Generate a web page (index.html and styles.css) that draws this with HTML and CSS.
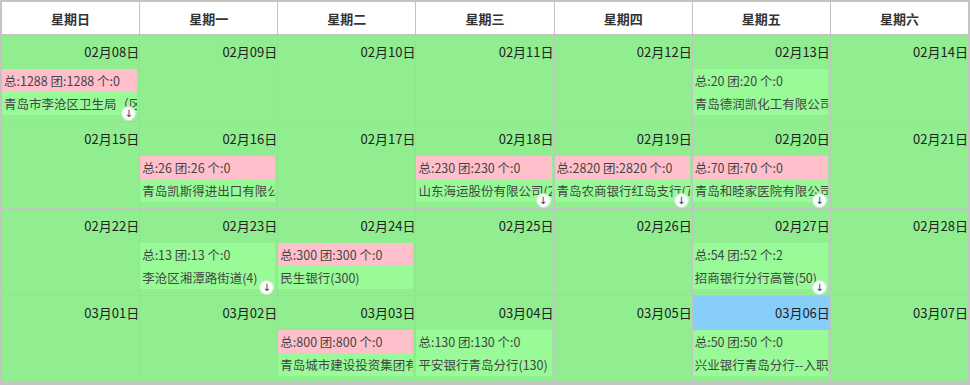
FILE: index.html
```html
<!DOCTYPE html>
<html lang="zh-CN">
<head>
<meta charset="utf-8">
<title>日历</title>
<link rel="stylesheet" href="styles.css">
</head>
<body>
<div class="cal">
  <div class="hd">星期日</div>
  <div class="hd">星期一</div>
  <div class="hd">星期二</div>
  <div class="hd">星期三</div>
  <div class="hd">星期四</div>
  <div class="hd">星期五</div>
  <div class="hd">星期六</div>

  <div class="cell"><div class="date">02月08日</div>
    <div class="ev"><div class="sum pink">总:1288 团:1288 个:0</div><div class="name">青岛市李沧区卫生局（区疾控中心）(1288)</div></div>
    <span class="more">↓</span></div>
  <div class="cell"><div class="date">02月09日</div></div>
  <div class="cell"><div class="date">02月10日</div></div>
  <div class="cell"><div class="date">02月11日</div></div>
  <div class="cell"><div class="date">02月12日</div></div>
  <div class="cell"><div class="date">02月13日</div>
    <div class="ev"><div class="sum">总:20 团:20 个:0</div><div class="name">青岛德润凯化工有限公司(20)</div></div></div>
  <div class="cell"><div class="date">02月14日</div></div>

  <div class="cell"><div class="date">02月15日</div></div>
  <div class="cell"><div class="date">02月16日</div>
    <div class="ev"><div class="sum pink">总:26 团:26 个:0</div><div class="name">青岛凯斯得进出口有限公司(26)</div></div></div>
  <div class="cell"><div class="date">02月17日</div></div>
  <div class="cell"><div class="date">02月18日</div>
    <div class="ev"><div class="sum pink">总:230 团:230 个:0</div><div class="name">山东海运股份有限公司(200)</div></div>
    <span class="more">↓</span></div>
  <div class="cell"><div class="date">02月19日</div>
    <div class="ev"><div class="sum pink">总:2820 团:2820 个:0</div><div class="name">青岛农商银行红岛支行(700)</div></div>
    <span class="more">↓</span></div>
  <div class="cell"><div class="date">02月20日</div>
    <div class="ev"><div class="sum pink">总:70 团:70 个:0</div><div class="name">青岛和睦家医院有限公司(70)</div></div>
    <span class="more">↓</span></div>
  <div class="cell"><div class="date">02月21日</div></div>

  <div class="cell"><div class="date">02月22日</div></div>
  <div class="cell"><div class="date">02月23日</div>
    <div class="ev"><div class="sum">总:13 团:13 个:0</div><div class="name">李沧区湘潭路街道(4)</div></div>
    <span class="more">↓</span></div>
  <div class="cell"><div class="date">02月24日</div>
    <div class="ev"><div class="sum pink">总:300 团:300 个:0</div><div class="name">民生银行(300)</div></div></div>
  <div class="cell"><div class="date">02月25日</div></div>
  <div class="cell"><div class="date">02月26日</div></div>
  <div class="cell"><div class="date">02月27日</div>
    <div class="ev"><div class="sum">总:54 团:52 个:2</div><div class="name">招商银行分行高管(50)</div></div>
    <span class="more">↓</span></div>
  <div class="cell"><div class="date">02月28日</div></div>

  <div class="cell"><div class="date">03月01日</div></div>
  <div class="cell"><div class="date">03月02日</div></div>
  <div class="cell"><div class="date">03月03日</div>
    <div class="ev"><div class="sum pink">总:800 团:800 个:0</div><div class="name">青岛城市建设投资集团有限公司(800)</div></div></div>
  <div class="cell"><div class="date">03月04日</div>
    <div class="ev"><div class="sum">总:130 团:130 个:0</div><div class="name">平安银行青岛分行(130)</div></div></div>
  <div class="cell"><div class="date">03月05日</div></div>
  <div class="cell"><div class="date today">03月06日</div>
    <div class="ev"><div class="sum">总:50 团:50 个:0</div><div class="name">兴业银行青岛分行--入职体检(50)</div></div></div>
  <div class="cell"><div class="date">03月07日</div></div>
</div>
</body>
</html>
```
FILE: styles.css
```css
html, body {
  margin: 0;
  padding: 0;
  background: #ffffff;
}
body {
  font-family: "Noto Sans CJK SC", "Liberation Sans", sans-serif;
  font-size: 12px;
  color: #222;
}
.cal {
  width: 970px;
  height: 385px;
  box-sizing: border-box;
  display: grid;
  grid-template-columns: repeat(7, 1fr);
  grid-template-rows: 32px 86px 86px 86px 86px;
  gap: 1px;
  background: #bfc4bf;
  border: 2px solid #c4c4c4;
  border-bottom-width: 3px;
}
.hd {
  background: #ffffff;
  display: flex;
  align-items: center;
  justify-content: center;
  font-size: 13px;
  font-weight: bold;
  color: #333;
}
.cell {
  position: relative;
  background: #90ee90;
  overflow: hidden;
  min-width: 0;
}
.date {
  height: 34px;
  line-height: 34px;
  text-align: right;
  padding-right: 0;
  font-size: 13px;
  color: #222;
}
.date.today {
  background: #87cefa;
}
.ev {
  margin-right: 2px;
  background: #98fb98;
  color: #454545;
  font-size: 12.5px;
}
.sum, .name {
  height: 23px;
  line-height: 23px;
  padding-left: 2px;
  white-space: nowrap;
  overflow: hidden;
}
.sum.pink {
  background: #ffc0cb;
}
.more {
  position: absolute;
  right: 3px;
  bottom: 0;
  width: 13px;
  height: 13px;
  border-radius: 50%;
  background: rgba(255, 255, 255, 0.9);
  border: 1px solid #dddddd;
  color: #3c2f6e;
  font-size: 10px;
  line-height: 13px;
  text-align: center;
  font-family: "DejaVu Sans", sans-serif;
}
```
